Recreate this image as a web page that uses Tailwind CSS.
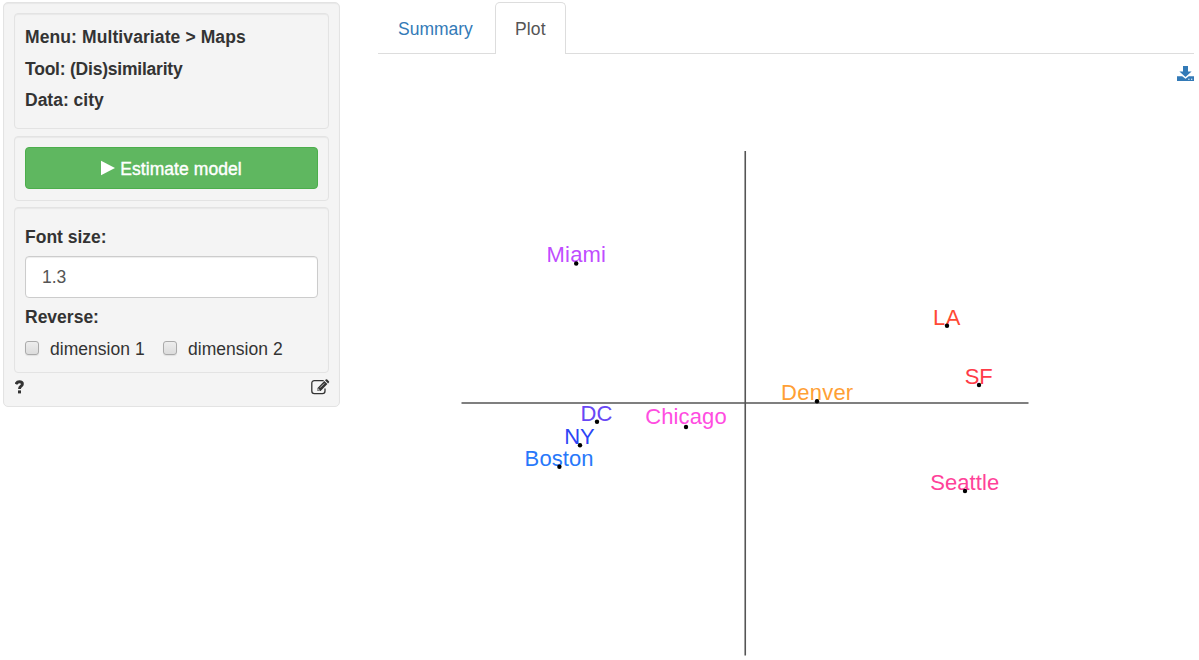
<!DOCTYPE html>
<html lang="en">
<head>
<meta charset="utf-8">
<title>(Dis)similarity</title>
<script src="https://cdn.jsdelivr.net/npm/@tailwindcss/browser@4"></script>
</head>
<body class="h-[660px] overflow-hidden bg-white font-['Liberation_Sans',sans-serif] text-[17.5px] leading-[25px] text-[#333]">
<div class="flex items-start">
  <aside class="mt-[2px] ml-[3px] flex h-[405px] w-[337px] shrink-0 flex-col rounded-[5px] border border-[#e3e3e3] bg-[#f4f4f4] px-[10px] pt-[10px] shadow-[inset_0_1px_1px_rgba(0,0,0,0.05)]">
    <section class="h-[116px] rounded-[4px] border border-[#e3e3e3] px-[10px] pt-[11px] font-bold shadow-[inset_0_1px_1px_rgba(0,0,0,0.05)]">
      <p class="mb-[7px] h-[25px] whitespace-nowrap"><span class="tracking-[0.1px]">Menu: Multivariate &gt; Maps</span></p>
      <p class="mb-[6px] h-[25px]"><span class="tracking-[-0.22px]">Tool: (Dis)similarity</span></p>
      <p class="h-[25px]">Data: city</p>
    </section>
    <section class="mt-[7px] h-[65px] rounded-[4px] border border-[#e3e3e3] px-[10px] pt-[10px] shadow-[inset_0_1px_1px_rgba(0,0,0,0.05)]">
      <button class="flex h-[42px] w-full items-center justify-center rounded-[4px] border border-[#4cae4c] bg-[#5fb760] pt-[2px] text-white">
        <svg class="-mt-[2px] mr-[5px] h-4 w-[14px]" viewBox="0 0 14 16" fill="currentColor"><path d="M0 .7v14.6L14 8z"/></svg>
        <span class="tracking-[0.07px] [-webkit-text-stroke:0.4px_white]">Estimate model</span>
      </button>
    </section>
    <section class="mt-[6px] h-[166px] rounded-[4px] border border-[#e3e3e3] px-[10px] pt-[17px] shadow-[inset_0_1px_1px_rgba(0,0,0,0.05)]">
      <label class="block h-[31px] font-bold">Font size:</label>
      <div class="flex h-[42px] items-center rounded-[4px] border border-[#ccc] bg-white pl-[16px] text-[#555] shadow-[inset_0_1px_1px_rgba(0,0,0,0.075)]">1.3</div>
      <div class="mt-[7px] h-[25px] font-bold">Reverse:</div>
      <div class="mt-[7px] flex h-[25px] items-center">
        <span class="mb-[3px] h-[14px] w-[14px] rounded-[3px] border border-[#aaa] bg-gradient-to-b from-[#ededed] to-[#dcdcdc] shadow-[0_1px_1px_rgba(0,0,0,0.08)]"></span>
        <span class="ml-[11px] w-[113px] whitespace-nowrap tracking-[0.03px]">dimension 1</span>
        <span class="mb-[3px] h-[14px] w-[14px] rounded-[3px] border border-[#aaa] bg-gradient-to-b from-[#ededed] to-[#dcdcdc] shadow-[0_1px_1px_rgba(0,0,0,0.08)]"></span>
        <span class="ml-[11px] whitespace-nowrap tracking-[0.03px]">dimension 2</span>
      </div>
    </section>
    <div class="flex items-start justify-between pt-[6px]">
      <svg class="mt-[1px] ml-[1px] h-[14px] w-[9px]" viewBox="0 0 9 14"><path d="M.9 4.200C1.700 2.500 2.700 1.800 4.300 1.800c1.800 0 3.100.9 3.100 2.300C7.400 6.300 4.500 6.200 4.500 9" fill="none" stroke="#333" stroke-width="2.900"/><path d="M3 10.400h3v3H3z" fill="#333"/></svg>
      <svg class="-mr-[1px] h-[16px] w-[19px]" viewBox="0 0 19 16" fill="none"><path d="M12.700 1.700H3.400Q.8 1.700.8 4.300v7.800q0 2.600 2.600 2.600h8q2.600 0 2.600-2.600V9.600" stroke="#333" stroke-width="1.300"/><path d="M6.500 12V8.900L13.300 2l3.100 3.100L9.600 12zM14 1.300l.8-.8q.7-.6 1.400 0l1.700 1.700q.6.700 0 1.400l-.8.800z" fill="#333"/><path d="M7.300 9.500v1.700H9M9 8.700l4.300-4.300" stroke="#f4f4f4" stroke-width=".7"/></svg>
    </div>
  </aside>
  <main class="ml-[38px] w-[816px]">
    <nav class="mt-[2px] flex h-[52px] border-b border-[#ddd]">
      <a class="h-[51px] w-[117px] pt-[15px] pl-[20px] text-[#337ab7]">Summary</a>
      <a class="h-[52px] w-[71px] rounded-t-[5px] border border-b-0 border-[#ddd] bg-white pt-[14px] pl-[19px] tracking-[0.15px] text-[#555]">Plot</a>
    </nav>
    <div class="flex h-[32px] justify-end pt-[12px]">
      <svg class="h-[16px] w-[17px]" viewBox="0 0 17 16"><path d="M6 0h5v5.500h3.600L8.500 11 2.400 5.500H6z" fill="#337ab7"/><path d="M0 10.300h5.200l3.300 2.500 3.300-2.500H17V15H0z" fill="#337ab7"/><path d="M11.200 12.700h1.300v1.100h-1.300zM14 12.700h1.300v1.100H14z" fill="#fff"/></svg>
    </div>
    <svg class="block h-[574px] w-[816px]" viewBox="378 86 816 574" font-family="Liberation Sans, sans-serif" font-size="22">
      <path d="M745.250 151v504.500" stroke="#555" stroke-width="1.600"/><path d="M461.500 403h567" stroke="#555" stroke-width="1.600"/>
      <g>
        <text x="546.500" y="262.200" textLength="59.500" fill="#bf4dff">Miami</text>
        <text x="932.900" y="325" textLength="27.500" fill="#ff4a35">LA</text>
        <text x="964.700" y="383.700" textLength="28" fill="#ff3b48">SF</text>
        <text x="781" y="399.900" textLength="72.200" fill="#ff9f35">Denver</text>
        <text x="580.500" y="421" textLength="32" fill="#6847f5">DC</text>
        <text x="645.200" y="424" textLength="81.500" fill="#ff4de1">Chicago</text>
        <text x="564.200" y="444" textLength="30.500" fill="#2d45f5">NY</text>
        <text x="524.600" y="465.700" textLength="69" fill="#2878fa">Boston</text>
        <text x="930.200" y="490.200" textLength="69" fill="#ff4299">Seattle</text>
      </g>
      <g fill="#000">
        <circle cx="576.200" cy="263.500" r="2.200"/><circle cx="947" cy="325.800" r="2.200"/><circle cx="979" cy="385" r="2.200"/><circle cx="817" cy="401.300" r="2.200"/><circle cx="597" cy="421.800" r="2.200"/><circle cx="686" cy="427" r="2.200"/><circle cx="580" cy="445.300" r="2.200"/><circle cx="559.400" cy="466.700" r="2.200"/><circle cx="965" cy="491" r="2.200"/>
      </g>
    </svg>
  </main>
</div>
</body>
</html>
